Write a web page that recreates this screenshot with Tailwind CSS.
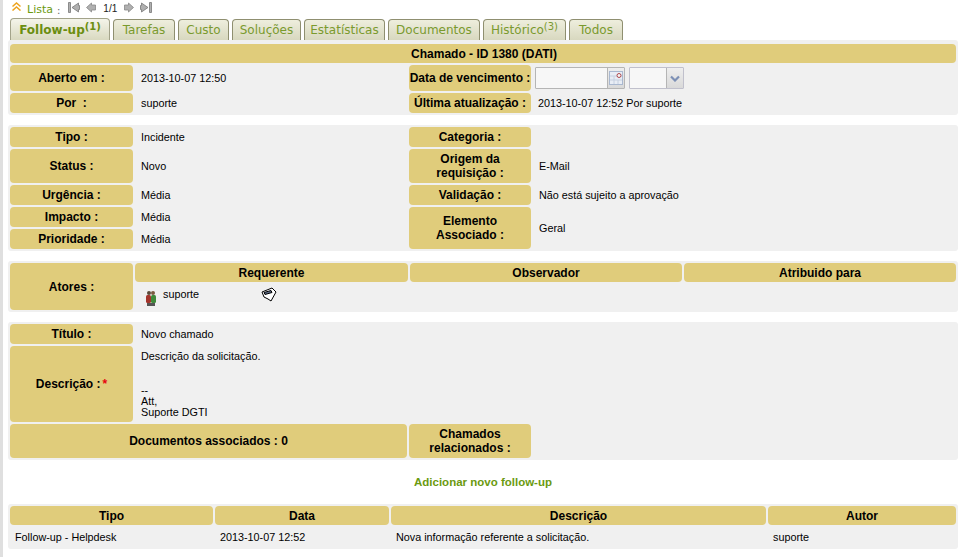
<!DOCTYPE html>
<html>
<head>
  <meta charset="UTF-8">
  <script src="https://cdn.jsdelivr.net/npm/@tailwindcss/browser@4"></script>
</head>
<body class="bg-white font-['Liberation_Sans',Arial,sans-serif] text-[10.8px] text-black overflow-hidden">
<div class="w-[965px] h-[557px] flex overflow-hidden">
  <div class="w-[3px] bg-[#dfdfdf] shrink-0"></div>
  <div class="w-[950px] ml-[5px] shrink-0">

    <!-- lista -->
    <div class="h-[18px] flex items-start font-['DejaVu_Sans',sans-serif] text-[11px] text-[#6b9a10]">
      <svg class="w-[9px] h-[9px] ml-[4px] mt-[2px]" viewBox="0 0 9 9" fill="none" stroke="#eda31c" stroke-width="1.500"><path d="M.5 4.500 4.500 1 8.500 4.500M.5 8.500 4.500 5 8.500 8.500"/></svg>
      <span class="ml-[6px] mt-[3px] leading-[14px]">Lista</span><span class="ml-[4px] mt-[4px] leading-[14px] text-[#666] text-[10px]">:</span>
      <svg class="w-[12px] h-[11px] ml-[8px] mt-[2px]" viewBox="0 0 12 11" fill="#b0b0b0" stroke="#777" stroke-width="0.800"><path d="M.5.500h2v10h-2zM10.500 1V3.500h1v4h-1V10L4 5.500z"/></svg>
      <svg class="w-[10px] h-[11px] ml-[6px] mt-[2px]" viewBox="0 0 10 11" fill="#b0b0b0" stroke="#888" stroke-width="0.800"><path d="M5.500 1V3h4v5h-4v2L.5 5.500z"/></svg>
      <span class="ml-[7px] mt-[2px] font-['Liberation_Sans',sans-serif] leading-[14px] text-[10px] text-[#222]">1/1</span>
      <svg class="w-[10px] h-[11px] ml-[7px] mt-[2px]" viewBox="0 0 10 11" fill="#b0b0b0" stroke="#888" stroke-width="0.800"><path d="M4.500 1V3h-4v5h4v2l5-4.500z"/></svg>
      <svg class="w-[12px] h-[11px] ml-[6px] mt-[2px]" viewBox="0 0 12 11" fill="#b0b0b0" stroke="#777" stroke-width="0.800"><path d="M9.500 .500h2v10h-2zM1.500 1V3.500h-1v4h1V10L8 5.500z"/></svg>
    </div>

    <!-- tabs -->
    <div class="h-[22px] flex items-end gap-[3px] pl-[2px] font-['DejaVu_Sans',sans-serif] text-[12px] text-[#7a9a2e]">
      <div class="h-[22px] w-[100px] flex items-center justify-center border border-b-0 border-[#a3a38a] rounded-t-[4px] bg-gradient-to-b from-[#f4f4ea] to-[#d9d9c0] font-bold text-[#6b8e10]">Follow-up<sup class="text-[10px] -top-[3px] leading-none">(1)</sup></div>
      <div class="h-[21px] w-[62px] flex items-center justify-center border border-b-0 border-[#8f8f70] rounded-t-[4px] bg-gradient-to-b from-[#eeeedd] to-[#d8d8bf]">Tarefas</div>
      <div class="h-[21px] w-[51px] flex items-center justify-center border border-b-0 border-[#8f8f70] rounded-t-[4px] bg-gradient-to-b from-[#eeeedd] to-[#d8d8bf]">Custo</div>
      <div class="h-[21px] w-[69px] flex items-center justify-center border border-b-0 border-[#8f8f70] rounded-t-[4px] bg-gradient-to-b from-[#eeeedd] to-[#d8d8bf]">Soluções</div>
      <div class="h-[21px] w-[81px] flex items-center justify-center border border-b-0 border-[#8f8f70] rounded-t-[4px] bg-gradient-to-b from-[#eeeedd] to-[#d8d8bf]">Estatísticas</div>
      <div class="h-[21px] w-[92px] flex items-center justify-center border border-b-0 border-[#8f8f70] rounded-t-[4px] bg-gradient-to-b from-[#eeeedd] to-[#d8d8bf]">Documentos</div>
      <div class="h-[21px] w-[83px] flex items-center justify-center border border-b-0 border-[#8f8f70] rounded-t-[4px] bg-gradient-to-b from-[#eeeedd] to-[#d8d8bf]">Histórico<sup class="text-[10px] -top-[3px] leading-none">(3)</sup></div>
      <div class="h-[21px] w-[54px] flex items-center justify-center border border-b-0 border-[#8f8f70] rounded-t-[4px] bg-gradient-to-b from-[#eeeedd] to-[#d8d8bf]">Todos</div>
    </div>

    <!-- cabecalho -->
    <div class="bg-[#f0f0f0] rounded-[3px] p-[2px] pt-[4px] grid grid-cols-[123px_272px_122px_1fr] gap-[2px] auto-rows-min">
      <div class="col-span-4 h-[19px] pl-[2px] bg-[#e0cc7b] rounded-[4px] flex items-center justify-center text-[12px] font-bold">Chamado - ID 1380 (DATI)</div>
      <div class="h-[26px] bg-[#e0cc7b] rounded-[4px] flex items-center justify-center text-[12px] font-bold">Aberto em :</div>
      <div class="pl-[6px] flex items-center">2013-10-07 12:50</div>
      <div class="bg-[#e0cc7b] rounded-[4px] flex items-center justify-center text-[12px] font-bold">Data de vencimento :</div>
      <div class="flex items-center gap-[4px] pl-[2px]">
        <div class="w-[90px] h-[22px] flex border border-[#b5b5b5] rounded-[1px] bg-[#f7f7f7]">
          <div class="ml-auto w-[17px] border-l border-[#b5b5b5] bg-gradient-to-b from-[#eeeeee] to-[#d9d9d9] flex items-center justify-center">
            <svg class="w-[14px] h-[14px]" viewBox="0 0 14 14"><rect x="0.500" y="0.500" width="13" height="13" fill="#e8edf5" stroke="#a9b8d0"/><path d="M1 5h12M1 9h12M5 5v8M9 9v4" stroke="#c6d0e0" stroke-width="1"/><circle cx="10" cy="4.500" r="2" fill="#f4f4f4" stroke="#b0484c"/></svg>
          </div>
        </div>
        <div class="w-[55px] h-[22px] flex border border-[#c0c0cc] rounded-[1px] bg-[#f7f7f7]">
          <div class="ml-auto w-[17px] border-l border-[#b5b5b5] bg-gradient-to-b from-[#eeeeee] to-[#d9d9d9] flex items-center justify-center">
            <svg class="w-[10px] h-[7px]" viewBox="0 0 10 7" fill="none" stroke="#7d90b5" stroke-width="2.200"><path d="M1 1.500 5 5.500 9 1.500"/></svg>
          </div>
        </div>
      </div>
      <div class="h-[20px] bg-[#e0cc7b] rounded-[4px] flex items-center justify-center text-[12px] font-bold">Por&nbsp; :</div>
      <div class="pl-[6px] flex items-center">suporte</div>
      <div class="bg-[#e0cc7b] rounded-[4px] flex items-center justify-center text-[12px] font-bold">Última atualização :</div>
      <div class="pl-[5px] flex items-center">2013-10-07 12:52 Por suporte</div>
    </div>

    <!-- dados -->
    <div class="mt-[10px] bg-[#f0f0f0] rounded-[3px] p-[2px] grid grid-cols-[123px_272px_122px_1fr] grid-rows-[20px_34px_20px_20px_20px] gap-[2px]">
      <div class="bg-[#e0cc7b] rounded-[4px] flex items-center justify-center text-[12px] font-bold">Tipo :</div>
      <div class="pl-[6px] flex items-center">Incidente</div>
      <div class="bg-[#e0cc7b] rounded-[4px] flex items-center justify-center text-[12px] font-bold">Categoria :</div>
      <div></div>
      <div class="bg-[#e0cc7b] rounded-[4px] flex items-center justify-center text-[12px] font-bold">Status :</div>
      <div class="pl-[6px] flex items-center">Novo</div>
      <div class="bg-[#e0cc7b] rounded-[4px] flex items-center justify-center text-center text-[12px] leading-[14px] font-bold">Origem da<br>requisição :</div>
      <div class="pl-[6px] flex items-center">E-Mail</div>
      <div class="bg-[#e0cc7b] rounded-[4px] flex items-center justify-center text-[12px] font-bold">Urgência :</div>
      <div class="pl-[6px] flex items-center">Média</div>
      <div class="bg-[#e0cc7b] rounded-[4px] flex items-center justify-center text-[12px] font-bold">Validação :</div>
      <div class="pl-[6px] flex items-center">Não está sujeito a aprovação</div>
      <div class="bg-[#e0cc7b] rounded-[4px] flex items-center justify-center text-[12px] font-bold">Impacto :</div>
      <div class="pl-[6px] flex items-center">Média</div>
      <div class="row-span-2 bg-[#e0cc7b] rounded-[4px] flex items-center justify-center text-center text-[12px] leading-[14px] font-bold">Elemento<br>Associado :</div>
      <div class="row-span-2 pl-[6px] flex items-center">Geral</div>
      <div class="bg-[#e0cc7b] rounded-[4px] flex items-center justify-center text-[12px] font-bold">Prioridade :</div>
      <div class="pl-[6px] flex items-center">Média</div>
    </div>

    <!-- atores -->
    <div class="mt-[10px] bg-[#f0f0f0] rounded-[3px] p-[2px] grid grid-cols-[123px_273px_272px_1fr] grid-rows-[19px_26px] gap-[2px]">
      <div class="row-span-2 bg-[#e0cc7b] rounded-[4px] flex items-center justify-center text-[12px] font-bold">Atores :</div>
      <div class="bg-[#e0cc7b] rounded-[4px] flex items-center justify-center text-[12px] font-bold">Requerente</div>
      <div class="bg-[#e0cc7b] rounded-[4px] flex items-center justify-center text-[12px] font-bold">Observador</div>
      <div class="bg-[#e0cc7b] rounded-[4px] flex items-center justify-center text-[12px] font-bold">Atribuido para</div>
      <div class="flex items-start pl-[10px] pt-[3px]">
        <svg class="w-[12px] h-[16px] mt-[3px]" viewBox="0 0 12 16"><circle cx="4" cy="3" r="2" fill="#5a4a3a"/><circle cx="8" cy="3" r="2" fill="#7a5a40"/><rect x="1" y="5" width="5" height="8" rx="1.500" fill="#a3352c"/><rect x="6" y="5" width="5" height="8" rx="1.500" fill="#3f8a3a"/><rect x="2" y="13" width="8" height="3" fill="#555"/></svg>
        <span class="ml-[6px] mt-[1px] leading-[12px]">suporte</span>
        <svg class="w-[16px] h-[15px] ml-[62px]" viewBox="0 0 16 15" fill="#fff" stroke="#000" stroke-width="1"><path d="M1 5 11 1 15 5 10 14 7 12 3 10z"/><path d="M3 5.500 10 3.500 11 5.500 4 7.500z" fill="#5a6a86"/></svg>
      </div>
      <div></div>
      <div></div>
    </div>

    <!-- descricao -->
    <div class="mt-[10px] bg-[#f0f0f0] rounded-[3px] p-[2px] grid grid-cols-[123px_272px_122px_1fr] grid-rows-[20px_76px_34px] gap-[2px]">
      <div class="bg-[#e0cc7b] rounded-[4px] flex items-center justify-center text-[12px] font-bold">Título :</div>
      <div class="col-span-3 pl-[6px] flex items-center">Novo chamado</div>
      <div class="bg-[#e0cc7b] rounded-[4px] flex items-center justify-center text-[12px] font-bold">Descrição :<span class="text-red-600 ml-[2px]">*</span></div>
      <div class="col-span-3 pl-[6px] pt-[5px] leading-[11.200px]">Descrição da solicitação.<br><br><br>--<br>Att,<br>Suporte DGTI</div>
      <div class="col-span-2 bg-[#e0cc7b] rounded-[4px] flex items-center justify-center text-[12px] font-bold">Documentos associados : 0</div>
      <div class="bg-[#e0cc7b] rounded-[4px] flex items-center justify-center text-center text-[12px] leading-[14px] font-bold">Chamados<br>relacionados :</div>
      <div></div>
    </div>

    <div class="h-[44px] pt-[2px] flex items-center justify-center text-[11.500px] font-bold text-[#6b9a10]">Adicionar novo follow-up</div>

    <!-- follow-ups -->
    <div class="bg-[#f0f0f0] rounded-[3px] p-[2px] grid grid-cols-[203px_174px_375px_1fr] grid-rows-[19px_20px] gap-[2px]">
      <div class="pt-[1px] bg-[#e0cc7b] rounded-[4px] flex items-center justify-center text-[12px] font-bold">Tipo</div>
      <div class="pt-[1px] bg-[#e0cc7b] rounded-[4px] flex items-center justify-center text-[12px] font-bold">Data</div>
      <div class="pt-[1px] bg-[#e0cc7b] rounded-[4px] flex items-center justify-center text-[12px] font-bold">Descrição</div>
      <div class="pt-[1px] bg-[#e0cc7b] rounded-[4px] flex items-center justify-center text-[12px] font-bold">Autor</div>
      <div class="pl-[5px] pt-[1px] flex items-center">Follow-up - Helpdesk</div>
      <div class="pl-[5px] pt-[1px] flex items-center">2013-10-07 12:52</div>
      <div class="pl-[5px] pt-[1px] flex items-center">Nova informação referente a solicitação.</div>
      <div class="pl-[5px] pt-[1px] flex items-center">suporte</div>
    </div>
  </div>
</div>
</body>
</html>
